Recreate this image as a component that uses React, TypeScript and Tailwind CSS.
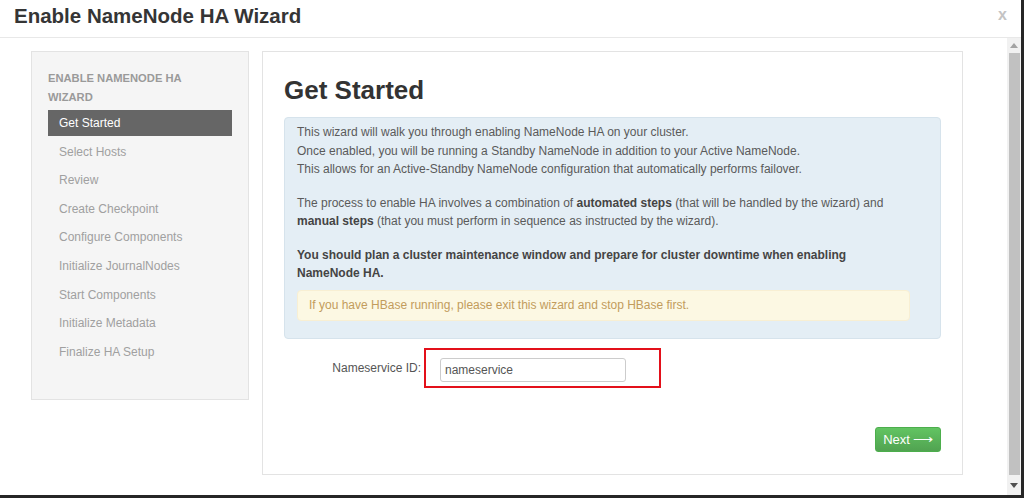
import React from "react";

const steps = [
  "Get Started",
  "Select Hosts",
  "Review",
  "Create Checkpoint",
  "Configure Components",
  "Initialize JournalNodes",
  "Start Components",
  "Initialize Metadata",
  "Finalize HA Setup",
];

export default function App() {
  return (
    <div className="w-[1024px] h-[498px] bg-white overflow-hidden flex flex-col border-r-[3px] border-b-[3px] border-[#262626] font-['Liberation_Sans',Arial,sans-serif] text-[#333]">
      {/* Header */}
      <div className="h-[38px] shrink-0 border-b border-[#e8e8e8] flex items-center justify-between pl-[14px] pr-[14px]">
        <h1 className="text-[20.5px] font-bold text-[#353535] leading-none mt-[-4px]">Enable NameNode HA Wizard</h1>
        <span className="text-[16px] font-bold text-[#c4c4c4] leading-none mt-[-8px]">x</span>
      </div>

      {/* Body */}
      <div className="flex flex-1 min-h-0">
        <div className="flex-1 flex items-start gap-[13px] pl-[31px] pt-[13px]">
          {/* Sidebar */}
          <div className="w-[218px] shrink-0 bg-[#f5f5f5] border border-[#e3e3e3] pl-[16px] pr-[16px] pt-[17px] pb-[34px]">
            <div className="max-w-[172px] text-[11.2px] font-bold uppercase text-[#9a9a9a] leading-[18.5px] mb-[4px]">
              Enable NameNode HA Wizard
            </div>
            <div className="flex flex-col gap-[2.6px]">
              {steps.map((s, i) => (
                <div
                  key={s}
                  className={
                    i === 0
                      ? "h-[26px] flex items-center pl-[11px] text-[12px] text-white bg-[#666666]"
                      : "h-[26px] flex items-center pl-[11px] text-[12px] text-[#a0a0a0]"
                  }
                >
                  {s}
                </div>
              ))}
            </div>
          </div>

          {/* Main panel */}
          <div className="w-[701px] shrink-0 border border-[#e3e3e3] bg-white px-[21px] pt-[20px] pb-[22px]">
            <h2 className="text-[26px] font-bold text-[#333] leading-[36px] mb-[9px]">Get Started</h2>

            <div className="rounded-[4px] bg-[#e4eef5] border border-[#d6e3ec] pl-[12px] pr-[30px] pt-[5px] pb-[17px] text-[12px] leading-[18.5px] text-[#5a5a5a]">
              <p className="mb-[15px]">
                This wizard will walk you through enabling NameNode HA on your cluster.
                <br />
                Once enabled, you will be running a Standby NameNode in addition to your Active NameNode.
                <br />
                This allows for an Active-Standby NameNode configuration that automatically performs failover.
              </p>
              <p className="mb-[15px]">
                The process to enable HA involves a combination of <b className="text-[#444]">automated steps</b> (that will be handled by the wizard) and
                <br />
                <b className="text-[#444]">manual steps</b> (that you must perform in sequence as instructed by the wizard).
              </p>
              <p className="font-bold text-[#444] mb-[7px]">
                You should plan a cluster maintenance window and prepare for cluster downtime when enabling
                <br />
                NameNode HA.
              </p>
              <div className="h-[31px] flex items-center rounded-[4px] bg-[#fcf8e3] border border-[#f8efd3] pl-[11px] text-[#c29c5c]">
                If you have HBase running, please exit this wizard and stop HBase first.
              </div>
            </div>

            <div className="flex items-center mt-[9px]">
              <label className="w-[137px] text-right text-[12px] text-[#555]">Nameservice ID:</label>
              <div className="ml-[3px] w-[237px] h-[40px] border-2 border-[#e3101a] pl-[14px] pt-[7px]">
                <input
                  readOnly
                  value="nameservice"
                  className="w-[186px] h-[24px] border border-[#cccccc] rounded-[3px] pl-[4px] text-[12px] text-[#555] bg-white outline-none font-['Liberation_Sans',Arial,sans-serif]"
                />
              </div>
            </div>

            <div className="flex justify-end mt-[39px]">
              <button className="w-[66px] h-[25px] rounded-[3px] border border-[#4cae4c] bg-gradient-to-b from-[#62c462] to-[#51a351] text-white text-[13px] leading-none flex items-center justify-center gap-[3px]">
                <span>Next</span>
                <span className="text-[14px]">⟶</span>
              </button>
            </div>
          </div>
        </div>

        {/* Scrollbar */}
        <div className="w-[14px] shrink-0 bg-[#f1f1f1] flex flex-col items-center">
          <div className="h-[15px] flex items-center justify-center">
            <svg width="8" height="5" viewBox="0 0 8 5"><path d="M0 5 L4 0 L8 5 Z" fill="#a3a3a3" /></svg>
          </div>
          <div className="w-[11px] flex-1 bg-[#c1c1c1]" />
          <div className="h-[20px] flex items-center justify-center">
            <svg width="8" height="5" viewBox="0 0 8 5"><path d="M0 0 L8 0 L4 5 Z" fill="#505050" /></svg>
          </div>
        </div>
      </div>
    </div>
  );
}
